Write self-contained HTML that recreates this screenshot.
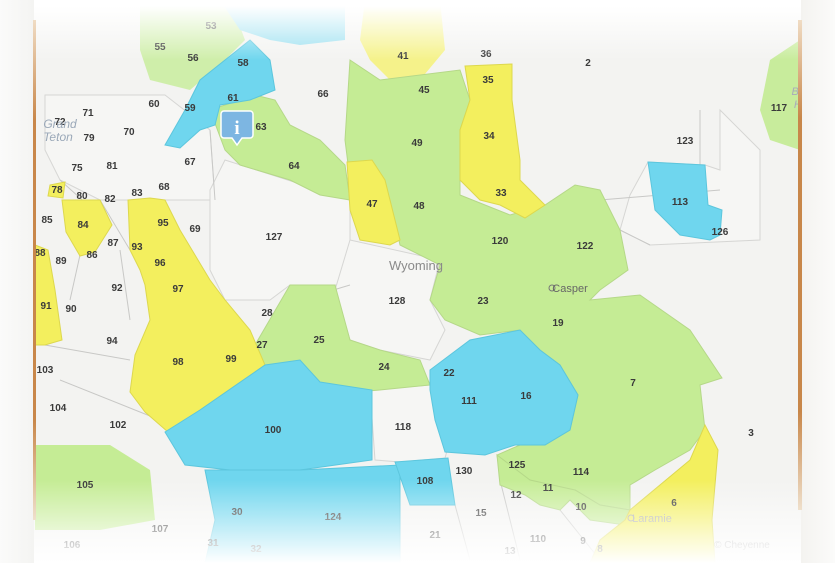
<!DOCTYPE html>
<html><head><meta charset="utf-8"><style>
html,body{margin:0;padding:0;width:835px;height:563px;overflow:hidden;background:#f3f3f1}
svg{position:absolute;left:0;top:0}
text{font-family:"Liberation Sans",sans-serif;font-size:10px;font-weight:bold;fill:#3a3a3a;text-anchor:middle}
.ov{position:absolute;pointer-events:none}
</style></head><body>
<svg width="835" height="563" viewBox="0 0 835 563">
<rect width="835" height="563" fill="#f3f3f1"/>
<g stroke="#d6d6d4" stroke-width="1" fill="#f6f6f4">
<polygon points="45,95 165,95 210,130 215,200 180,200 130,200 100,200 60,180 45,150"/>
<polygon points="225,160 350,200 350,285 290,285 270,300 225,300 210,270 210,190"/>
<polygon points="350,240 440,260 430,300 445,330 430,360 380,350 350,340 335,290"/>
<polygon points="370,390 430,385 450,440 445,458 400,462 375,460"/>
<polygon points="720,110 720,170 705,165 648,162 630,195 620,230 650,245 760,240 760,150"/>
</g>
<g stroke="#c8c8c6" stroke-width="1" fill="none">
<path d="M60,180 L110,225 M100,200 L130,250 M80,255 L70,300 M120,250 L130,320 M45,345 L130,360 M60,380 L160,420 M210,130 L215,200 M350,285 L300,300 M700,110 L700,165 M620,230 L650,245 M455,505 L470,560 M500,480 L520,560 M560,510 L600,560 M600,200 L720,190"/>
</g>
<polygon points="140,0 230,0 245,40 225,60 190,90 150,80 140,50" fill="#cfeeaa"/>
<polygon points="220,0 345,0 345,40 300,45 270,40 240,30" fill="#9be0f0"/>
<polygon points="365,0 440,0 445,50 420,80 395,85 370,60 360,40" fill="#f5f28a"/>
<polygon points="770,60 800,40 800,150 770,140 760,110" fill="#c8ec9c"/>
<polygon fill="#c5ec95" stroke="#b5d888" points="350,60 380,80 460,70 470,100 460,130 460,195 510,215 545,205 575,185 600,190 620,230 628,270 600,290 590,300 640,295 690,330 722,378 700,385 705,430 690,450 655,470 630,485 630,510 600,505 575,490 555,505 530,480 500,475 497,455 520,445 545,445 570,430 578,395 560,365 540,350 520,330 480,335 445,320 430,300 440,265 400,245 390,200 350,180 345,140"/>
<polygon fill="#c5ec95" stroke="#b5d888" points="210,110 255,95 275,100 290,125 320,140 345,165 350,200 320,195 290,180 240,165 225,150"/>
<polygon fill="#c5ec95" stroke="#b5d888" points="255,345 290,285 335,285 350,340 380,350 420,360 430,385 380,390 320,395 300,365 260,365"/>
<polygon fill="#c5ec95" points="35,445 110,445 150,470 155,520 100,530 35,530"/>
<polygon fill="#c5ec95" stroke="#b5d888" points="497,455 530,480 575,490 600,505 630,510 625,525 590,520 570,500 560,510 540,505 525,495 500,485"/>
<g fill="#f3ef5e" stroke="#ddd84e">
<polygon points="347,162 372,160 385,180 390,200 400,240 390,245 360,240 350,210"/>
<polygon points="465,66 512,64 512,100 520,160 520,180 545,205 525,218 500,205 480,200 460,180 460,130 470,100"/>
<polygon points="128,200 150,198 165,200 180,230 195,255 210,280 225,300 250,330 265,365 200,410 168,432 145,412 130,392 135,355 150,320 145,285 140,270 130,250"/>
<polygon points="62,200 100,200 112,225 95,252 80,256 66,232"/>
<polygon points="50,185 65,182 63,198 48,196"/>
<polygon points="35,245 48,250 55,290 62,340 45,345 35,345"/>
<polygon points="630,510 690,460 705,425 718,450 712,520 715,563 590,563 600,540 625,520"/>
</g>
<g fill="#6fd6ee" stroke="#5cc6dd">
<polygon points="165,432 200,410 265,365 300,360 320,382 372,390 372,460 300,470 230,470 185,465"/>
<polygon points="205,470 300,470 400,465 400,563 205,563 215,520"/>
<polygon points="395,462 448,458 455,505 410,505"/>
<polygon points="430,370 470,340 520,330 540,350 560,365 578,395 570,430 545,445 515,445 485,455 445,452 435,420 430,390"/>
<polygon points="648,162 705,165 708,205 722,210 720,235 710,240 680,235 655,210"/>
<polygon points="165,145 185,110 200,80 225,60 250,40 270,60 275,90 250,100 220,105 215,125 200,130 180,148"/>
</g>
<g>
<text x="193" y="61">56</text><text x="160" y="50">55</text><text x="243" y="66">58</text><text x="211" y="29">53</text>
<text x="233" y="101">61</text><text x="190" y="111">59</text><text x="154" y="107">60</text><text x="261" y="130">63</text>
<text x="294" y="169">64</text><text x="323" y="97">66</text><text x="403" y="59">41</text><text x="424" y="93">45</text>
<text x="417" y="146">49</text><text x="372" y="207">47</text><text x="419" y="209">48</text><text x="488" y="83">35</text>
<text x="486" y="57">36</text><text x="489" y="139">34</text><text x="501" y="196">33</text><text x="500" y="244">120</text>
<text x="585" y="249">122</text><text x="588" y="66">2</text><text x="685" y="144">123</text><text x="680" y="205">113</text>
<text x="720" y="235">126</text><text x="779" y="111">117</text><text x="88" y="116">71</text><text x="60" y="125">72</text>
<text x="89" y="141">79</text><text x="129" y="135">70</text><text x="190" y="165">67</text><text x="77" y="171">75</text>
<text x="112" y="169">81</text><text x="57" y="193">78</text><text x="82" y="199">80</text><text x="110" y="202">82</text>
<text x="137" y="196">83</text><text x="164" y="190">68</text><text x="47" y="223">85</text><text x="83" y="228">84</text>
<text x="163" y="226">95</text><text x="195" y="232">69</text><text x="274" y="240">127</text><text x="113" y="246">87</text>
<text x="137" y="250">93</text><text x="92" y="258">86</text><text x="40" y="256">88</text><text x="61" y="264">89</text>
<text x="160" y="266">96</text><text x="117" y="291">92</text><text x="178" y="292">97</text><text x="46" y="309">91</text>
<text x="71" y="312">90</text><text x="267" y="316">28</text><text x="112" y="344">94</text><text x="262" y="348">27</text>
<text x="319" y="343">25</text><text x="397" y="304">128</text><text x="483" y="304">23</text><text x="558" y="326">19</text>
<text x="45" y="373">103</text><text x="178" y="365">98</text><text x="231" y="362">99</text><text x="384" y="370">24</text>
<text x="449" y="376">22</text><text x="469" y="404">111</text><text x="526" y="399">16</text><text x="633" y="386">7</text>
<text x="58" y="411">104</text><text x="118" y="428">102</text><text x="273" y="433">100</text><text x="403" y="430">118</text>
<text x="751" y="436">3</text><text x="464" y="474">130</text><text x="517" y="468">125</text><text x="581" y="475">114</text>
<text x="85" y="488">105</text><text x="425" y="484">108</text><text x="516" y="498">12</text><text x="548" y="491">11</text>
<text x="674" y="506">6</text><text x="581" y="510">10</text><text x="237" y="515">30</text><text x="333" y="520">124</text>
<text x="481" y="516">15</text><text x="160" y="532">107</text><text x="435" y="538">21</text><text x="538" y="542">110</text>
<text x="583" y="544">9</text><text x="72" y="548">106</text><text x="213" y="546">31</text><text x="256" y="552">32</text>
<text x="510" y="554">13</text><text x="600" y="552">8</text>
</g>
<text x="416" y="270" style="font-size:13px;font-weight:normal;fill:#8a8a8a">Wyoming</text>
<circle cx="552" cy="288" r="3" fill="none" stroke="#777"/><text x="570" y="292" style="font-size:11px;font-weight:normal;fill:#666">Casper</text>
<circle cx="631" cy="518" r="3" fill="none" stroke="#aaa"/><text x="652" y="522" style="font-size:11px;font-weight:normal;fill:#aaa">Laramie</text>
<text x="742" y="548" style="font-size:10px;font-weight:normal;fill:#aaa">© Cheyenne</text>
<text x="60" y="128" style="font-size:12px;font-weight:normal;font-style:italic;fill:#9aa8b8">Grand</text>
<text x="58" y="141" style="font-size:12px;font-weight:normal;font-style:italic;fill:#9aa8b8">Teton</text>
<text x="810" y="95" style="font-size:11px;font-weight:normal;font-style:italic;fill:#aab">B L A C</text>
<text x="810" y="108" style="font-size:11px;font-weight:normal;font-style:italic;fill:#aab">H I L L</text>
<path d="M224,111 h26 a3,3 0 0 1 3,3 v21 a3,3 0 0 1 -3,3 h-8 l-5,7 l-5,-7 h-8 a3,3 0 0 1 -3,-3 v-21 a3,3 0 0 1 3,-3z" fill="#7db6e2" stroke="#fff" stroke-width="1.5"/>
<text x="237" y="134" style="font-size:19px;font-family:'Liberation Serif',serif;fill:#fff">i</text>
</svg>
<div class="ov" style="left:0;top:0;width:835px;height:60px;background:linear-gradient(#fff 10%,rgba(255,255,255,0))"></div>
<div class="ov" style="left:0;top:480px;width:835px;height:83px;background:linear-gradient(rgba(255,255,255,0),#fff)"></div>
<div class="ov" style="left:0;top:0;width:34px;height:563px;background:linear-gradient(90deg,#fbfbfa,#f4f4f2)"></div>
<div class="ov" style="left:801px;top:0;width:34px;height:563px;background:linear-gradient(90deg,#f4f3f0,#fbfbfa)"></div>
<div class="ov" style="left:33px;top:20px;width:3px;height:500px;background:linear-gradient(#f0dcc4,#c8874a 20%,#c8874a 80%,#efe0cc)"></div>
<div class="ov" style="left:798px;top:20px;width:4px;height:490px;background:linear-gradient(#f0dcc4,#c8874a 20%,#c8874a 80%,#efe0cc)"></div>
</body></html>
